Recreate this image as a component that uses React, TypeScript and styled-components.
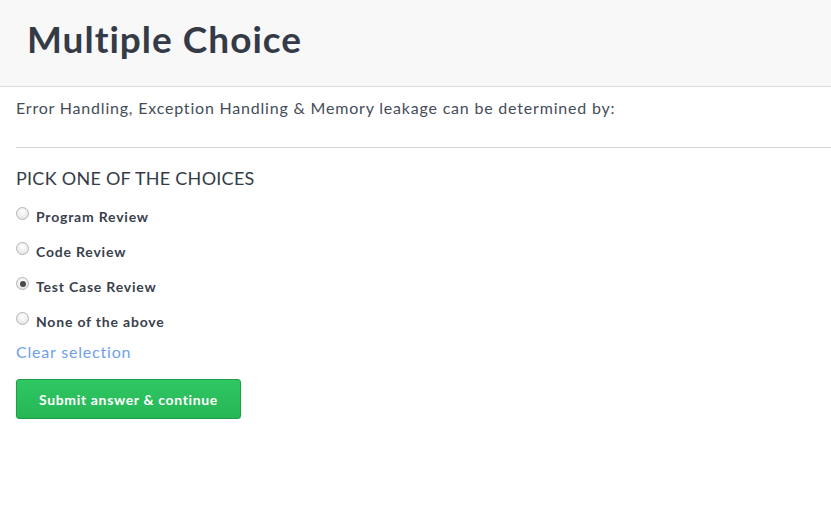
import React, { useState } from "react";
import styled, { createGlobalStyle } from "styled-components";

const Global = createGlobalStyle`
  html, body { margin: 0; padding: 0; background: #ffffff; }
  body { font-family: Lato, "Open Sans", sans-serif; color: #39404b; }
  * { box-sizing: border-box; }
`;

const Header = styled.header`
  background: #f8f8f8;
  border-bottom: 1px solid #dcdcdc;
  height: 87px;
  padding: 17px 27px 0;
`;

const Title = styled.h1`
  margin: 0;
  font-size: 37px;
  line-height: 44px;
  font-weight: 700;
  color: #343b47;
  letter-spacing: 1px;
`;

const Body = styled.main`
  padding: 0 0 0 16px;
`;

const Question = styled.p`
  margin: 0;
  padding: 10px 0 28px;
  font-size: 16px;
  line-height: 22px;
  color: #454d59;
  letter-spacing: 0.8px;
  border-bottom: 1px solid #d6d6d6;
`;

const SectionTitle = styled.h2`
  margin: 18px 0 0;
  font-size: 18px;
  line-height: 24px;
  font-weight: 400;
  color: #353c48;
  letter-spacing: 0.26px;
  text-transform: uppercase;
`;

const Choices = styled.div`
  display: flex;
  flex-direction: column;
  margin-top: 9px;
`;

const Choice = styled.label`
  display: flex;
  align-items: center;
  height: 35px;
  gap: 7px;
  font-size: 14px;
  font-weight: 700;
  color: #3a414c;
  letter-spacing: 0.8px;
  cursor: pointer;
`;

const Radio = styled.input.attrs({ type: "radio" })`
  appearance: none;
  margin: -6px 0 0 0;
  width: 13px;
  height: 13px;
  border-radius: 50%;
  border: 1px solid #b4b4b4;
  background: radial-gradient(circle at 50% 35%, #ffffff 0%, #ececec 60%, #dadada 100%);
  position: relative;
  flex: none;
  &:checked::after {
    content: "";
    position: absolute;
    left: 2.5px;
    top: 2.5px;
    width: 6px;
    height: 6px;
    border-radius: 50%;
    background: #4a4a4a;
  }
`;

const ClearLink = styled.a`
  display: inline-block;
  margin-top: 2px;
  font-size: 16px;
  line-height: 22px;
  color: #6fa0ea;
  letter-spacing: 0.8px;
  text-decoration: none;
  cursor: pointer;
`;

const SubmitButton = styled.button`
  display: block;
  margin-top: 16px;
  width: 225px;
  height: 40px;
  border: 1px solid #1f9e48;
  border-radius: 3px;
  background: linear-gradient(#2fc763, #27b656);
  color: #ffffff;
  font-family: Lato, sans-serif;
  font-size: 14px;
  font-weight: 700;
  letter-spacing: 0.65px;
  box-shadow: 0 1px 2px rgba(0, 0, 0, 0.15);
  cursor: pointer;
`;

const options = ["Program Review", "Code Review", "Test Case Review", "None of the above"];

export default function App() {
  const [selected, setSelected] = useState<number | null>(2);
  return (
    <>
      <Global />
      <Header>
        <Title>Multiple Choice</Title>
      </Header>
      <Body>
        <Question>Error Handling, Exception Handling &amp; Memory leakage can be determined by:</Question>
        <SectionTitle>Pick one of the choices</SectionTitle>
        <Choices>
          {options.map((o, i) => (
            <Choice key={o}>
              <Radio name="choice" checked={selected === i} onChange={() => setSelected(i)} />
              {o}
            </Choice>
          ))}
        </Choices>
        <ClearLink onClick={() => setSelected(null)}>Clear selection</ClearLink>
        <SubmitButton>Submit answer &amp; continue</SubmitButton>
      </Body>
    </>
  );
}
